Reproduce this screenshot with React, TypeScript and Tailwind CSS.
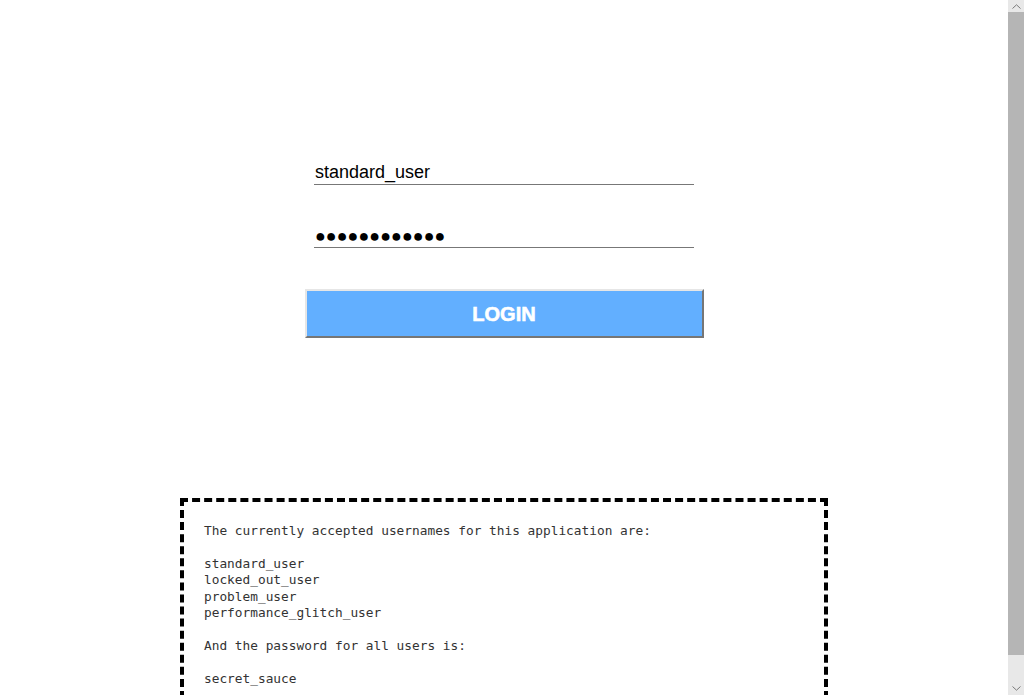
import React from 'react';

const users = ['standard_user', 'locked_out_user', 'problem_user', 'performance_glitch_user'];

const ScrollBar = () => (
  <div className="w-4 shrink-0 h-full flex flex-col bg-[#e8e8e8]">
    <div className="h-3 flex items-center justify-center">
      <svg width="9" height="5" viewBox="0 0 9 5" fill="none" stroke="#7a7a7a" strokeWidth="1">
        <path d="M0.5 4.5 L4.5 0.8 L8.5 4.5" />
      </svg>
    </div>
    <div className="h-[643px] bg-[#b5b5b5]" />
    <div className="flex-1" />
    <div className="h-[14px] flex items-center justify-center">
      <svg width="9" height="5" viewBox="0 0 9 5" fill="none" stroke="#7a7a7a" strokeWidth="1">
        <path d="M0.5 0.5 L4.5 4.2 L8.5 0.5" />
      </svg>
    </div>
  </div>
);

export default function App() {
  return (
    <div className="h-screen flex overflow-hidden bg-white font-['Liberation_Sans',Arial,sans-serif]">
      <main className="flex-1 min-w-0 overflow-hidden">
        <div className="pt-[163px]">
          <form className="w-[399px] mx-auto flex flex-col items-center" onSubmit={(e) => e.preventDefault()}>
            <input
              type="text"
              defaultValue="standard_user"
              className="w-[380px] h-[22px] p-0 pl-px pb-[2px] text-[18px] text-black bg-transparent border-0 border-b border-[#777] outline-none"
            />
            {/* masked value drawn with U+25CF, as the reference shows it */}
            <input
              type="text"
              aria-label="Password"
              readOnly
              defaultValue={'\u25CF'.repeat(12)}
              className="mt-[41px] w-[380px] h-[22px] p-0 pl-px text-[18px] text-black bg-transparent border-0 border-b border-[#777] outline-none"
            />
            <button
              type="submit"
              className="mt-[41px] w-[399px] h-[49px] bg-[#62afff] text-white text-[20px] font-bold [-webkit-text-stroke:0.6px_white] border-2 border-t-[#e6e6e6] border-l-[#e6e6e6] border-r-[#767676] border-b-[#767676]"
            >
              LOGIN
            </button>
          </form>
        </div>
        <div className="mt-[160px] mx-auto w-[648px] border-4 border-dashed border-black px-5 pt-[21px] pb-5 font-['DejaVu_Sans_Mono','Liberation_Mono',monospace] text-[12.8px] leading-[16.4px] text-[#333]">
          <p>The currently accepted usernames for this application are:</p>
          <p className="mt-[16.4px]">
            {users.map((u) => (
              <span key={u} className="block">{u}</span>
            ))}
          </p>
          <p className="mt-[16.4px]">And the password for all users is:</p>
          <p className="mt-[16.4px]">secret_sauce</p>
        </div>
      </main>
      <ScrollBar />
    </div>
  );
}
